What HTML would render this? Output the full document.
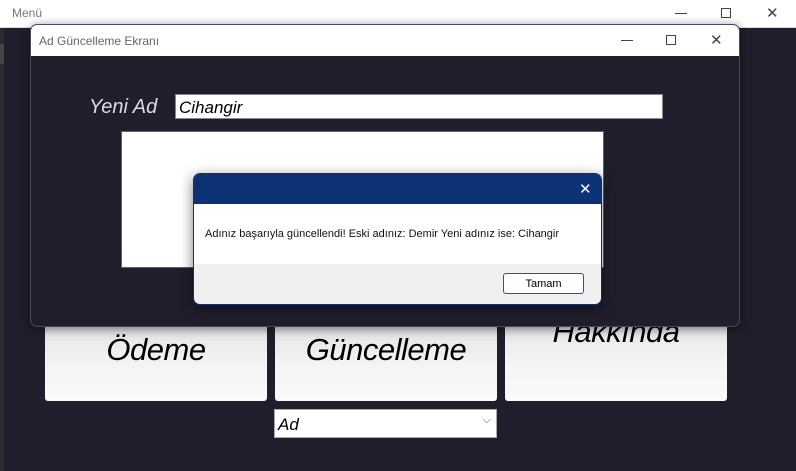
<!DOCTYPE html><html><head><style>
body{margin:0;width:796px;height:471px;overflow:hidden;background:#201e2c;position:relative;font-family:"Liberation Sans",sans-serif}
div{position:absolute;box-sizing:border-box}
.t{font-family:"Liberation Sans",sans-serif;font-style:italic}
.btn{background:linear-gradient(#ddd,#f4f4f4 60%,#fafafa);border-radius:3px;color:#000;font-size:31px;text-align:center;font-style:italic;letter-spacing:-0.5px}
.x{font-size:15px;color:#444;font-weight:300}
</style></head><body>
<div style="left:0;top:0;width:796px;height:28px;background:#fff;border-bottom:1px solid #ddd"></div>
<div style="left:12px;top:6px;font-size:12px;color:#777">Menü</div>
<div style="left:675px;top:13px;width:12px;height:1px;background:#444"></div>
<div style="left:721px;top:8px;width:10px;height:10px;border:1px solid #444"></div>
<div class="x" style="left:766px;top:4px">✕</div>
<div style="left:0;top:28px;width:4px;height:443px;background:#2a2a30"></div>
<div style="left:0;top:44px;width:4px;height:20px;background:#444"></div>
<div class="btn" style="left:45px;top:310px;width:222px;height:91px;padding-top:22px">Ödeme</div>
<div class="btn" style="left:275px;top:310px;width:222px;height:91px;padding-top:22px">Güncelleme</div>
<div class="btn" style="left:505px;top:300px;width:222px;height:101px;padding-top:14px">Hakkında</div>
<div class="t" style="left:274px;top:409px;width:223px;height:29px;background:#fff;border:1px solid #aaa;font-size:17px;padding:5px 0 0 3px">Ad<span style="position:absolute;right:5px;top:4px;font-style:normal;font-size:11px;color:#555">⌵</span></div>
<div style="left:30px;top:24px;width:710px;height:303px;background:#201e2c;border:1px solid #4a4858;border-radius:7px;overflow:hidden;box-shadow:0 2px 10px rgba(0,0,0,.5)">
 <div style="left:0;top:0;width:710px;height:31px;background:#fff"></div>
 <div style="left:8px;top:9px;font-size:12px;color:#666">Ad Güncelleme Ekranı</div>
 <div style="left:590px;top:15px;width:12px;height:1px;background:#444"></div>
 <div style="left:635px;top:10px;width:10px;height:10px;border:1px solid #444"></div>
 <div class="x" style="left:679px;top:6px">✕</div>
 <div class="t" style="left:58px;top:71px;font-size:20px;color:#ddd">Yeni Ad</div>
 <div class="t" style="left:144px;top:69px;width:488px;height:25px;background:#fff;border:1px solid #888;font-size:17px;padding:3px 0 0 3px">Cihangir</div>
 <div style="left:90px;top:106px;width:483px;height:137px;background:#fff;border:1px solid #0a78d7"></div>
</div>
<div style="left:193px;top:173px;width:409px;height:132px;background:#f0f0f0;border-radius:7px;overflow:hidden;border:1px solid #0c3275;box-shadow:0 4px 14px rgba(0,0,0,.5)">
 <div style="left:0;top:0;width:409px;height:30px;background:#0c3275"></div>
 <div class="x" style="left:385px;top:6px;color:#fff">✕</div>
 <div style="left:0;top:30px;width:409px;height:60px;background:#fff"></div>
 <div style="left:11px;top:54px;font-size:11px;color:#111">Adınız başarıyla güncellendi! Eski adınız: Demir Yeni adınız ise: Cihangir</div>
 <div style="left:309px;top:99px;width:81px;height:21px;background:#fdfdfd;border:1px solid #0a5fb4;border-radius:3px;font-size:11px;text-align:center;padding-top:4px">Tamam</div>
</div>
</body></html>
